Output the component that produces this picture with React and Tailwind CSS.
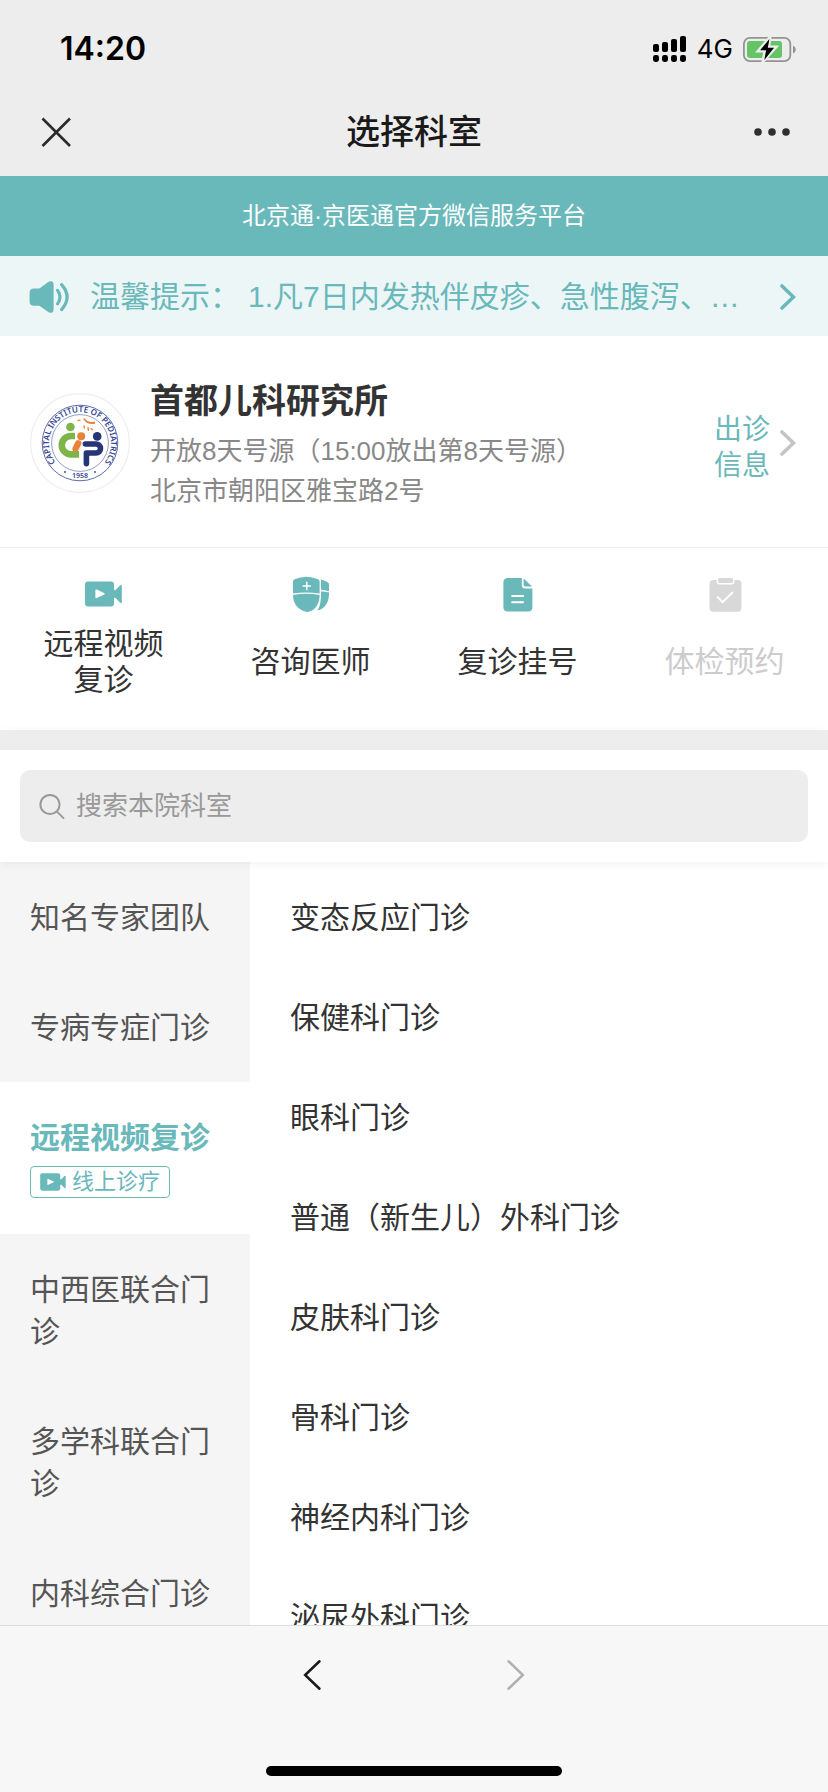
const categories = [
  { name: '知名专家团队' },
  { name: '专病专症门诊' },
  { name: '远程视频复诊', tag: '线上诊疗', active: true },
  { name: '中西医联合门诊' },
  { name: '多学科联合门诊' },
  { name: '内科综合门诊' },
];

const departments = [
  '变态反应门诊',
  '保健科门诊',
  '眼科门诊',
  '普通（新生儿）外科门诊',
  '皮肤科门诊',
  '骨科门诊',
  '神经内科门诊',
  '泌尿外科门诊',
];

function VideoIcon({ className }) {
  return (
    <svg viewBox="0 0 37 26" className={className} fill="currentColor" aria-hidden="true">
      <rect x="0" y="0.5" width="29" height="25" rx="3" />
      <path d="M28 9.5 30.5 9 35 4.4Q36.8 3 36.8 5V21Q36.8 23 35 21.6L30.5 17 28 16.5Z" />
      <path d="M10.4 9.4Q10.4 8 11.8 8.6L19.4 12.2Q20.4 12.8 19.4 13.4L11.8 17Q10.4 17.6 10.4 16.2Z" fill="#fff" />
    </svg>
  );
}

function ShieldIcon() {
  return (
    <svg viewBox="0 0 36 36" className="size-9" fill="currentColor" aria-hidden="true">
      <path d="M0 5.6Q0 3.8 1.6 3.2 13.4-1.8 25 3.2 26.6 3.8 26.6 5.6V17.6Q13.4 15.2 0 17.6Z" />
      <path d="M0 19Q13.4 16.6 26.6 19C26.6 27 23 33.6 16.4 35.6Q14.2 36.3 12 35.6C4.6 33.2 0 27 0 19Z" />
      <path d="M28 3.6Q32 4.6 35 6.4 36 7 36 8.2V15.2Q32 14.2 28 13.8Z" />
      <path d="M28 15.2Q32 15.4 36 16.6C36.2 25.6 32.4 32.8 24.4 34.6 27.2 30.6 28.2 24 28 15.2Z" />
      <path d="M13.8 5.8V14.2M9.6 10H18" stroke="#fff" strokeWidth="1.5" fill="none" />
    </svg>
  );
}

function DocumentIcon() {
  return (
    <svg viewBox="0 0 36 36" className="size-9" fill="currentColor" aria-hidden="true">
      <path d="M8 2H21.8V9Q21.8 12.4 25.2 12.4H32.4V31Q32.4 35.6 28 35.6H8Q3.4 35.6 3.4 31V6.6Q3.4 2 8 2Z" />
      <path d="M23.6 2.4 32 10.6H25.4Q23.6 10.6 23.6 8.8Z" />
      <path d="M11.4 20H23.8M11.4 26.2H23.8" stroke="#fff" strokeWidth="2" fill="none" />
    </svg>
  );
}

function ClipboardIcon() {
  return (
    <svg viewBox="0 0 36 36" className="size-9" fill="currentColor" aria-hidden="true">
      <rect x="2.5" y="4" width="32" height="31.7" rx="4" />
      <rect x="9.6" y="1" width="17.8" height="7.4" rx="3" fill="#fff" />
      <rect x="10.8" y="2" width="15.4" height="5" rx="2" />
      <path d="M10.2 20.6 15.6 26.2 26 16" stroke="#fff" strokeWidth="1.8" fill="none" />
    </svg>
  );
}

function Chevron({ className, width = 3, flip = false }) {
  return (
    <svg viewBox="0 0 16 26" className={className} fill="none" stroke="currentColor" strokeWidth={width} strokeLinecap="round" aria-hidden="true">
      <path d={flip ? 'M14 2 2.5 13 14 24' : 'M2 2 13.5 13 2 24'} />
    </svg>
  );
}

function HospitalLogo() {
  return (
    <svg viewBox="0 0 100 100" className="size-[100px] shrink-0" role="img" aria-label="首都儿科研究所">
      <defs>
        <path id="ring" d="M32 75.4A31 31 0 1 1 68 75.4" />
      </defs>
      <circle cx="50" cy="50" r="49.3" fill="#fff" stroke="#eeeeee" strokeWidth="1.2" />
      <g fill="none" stroke="#4a5aa3">
        <circle cx="50" cy="50" r="37.8" strokeWidth="0.9" />
        <circle cx="50" cy="50" r="28.4" strokeWidth="0.6" />
      </g>
      <g fill="#34458f" fontFamily="'Noto Sans', 'Liberation Sans', sans-serif" fontWeight="600">
        <text fontSize="8.2" textAnchor="middle">
          <textPath href="#ring" startOffset="50%">CAPITAL INSTITUTE OF PEDIATRICS</textPath>
        </text>
        <text x="50" y="85" fontSize="7" textAnchor="middle">1958</text>
      </g>
      <circle cx="35" cy="79" r="0.9" fill="#34458f" />
      <circle cx="65" cy="79" r="0.9" fill="#34458f" />
      <circle cx="40.4" cy="34" r="4.3" fill="#7db548" />
      <path d="M45 43H41A9.2 9.2 0 0 0 41 61.4H49" fill="none" stroke="#7db548" strokeWidth="6.6" />
      <path d="M48.2 50.4 45.6 55.6" stroke="#e8833a" strokeWidth="6.4" strokeLinecap="round" />
      <circle cx="51.2" cy="43.2" r="4" fill="#e8833a" />
      <path d="M53 25.4Q57 32.4 65 30.8L64.8 28.6Q58 30 54.6 25.2Z" fill="#e8833a" />
      <path d="M48 27.6 50 27.2M54 33 54.4 35M58 34.4 58.4 37.4M61 35.6 62.4 36.8" stroke="#e8833a" strokeWidth="1.3" strokeLinecap="round" />
      <circle cx="67.2" cy="43.4" r="4.3" fill="#263577" />
      <path d="M55.4 51H66A4.5 4.5 0 0 1 66 60H56.4V70.6" fill="none" stroke="#263577" strokeWidth="5.6" strokeLinecap="round" strokeLinejoin="round" />
    </svg>
  );
}

function StatusBar() {
  return (
    <div className="flex h-[88px] items-center justify-between pt-2.5 pr-8 pl-[60px]">
      <span className="font-[Inter,sans-serif] text-[32px] leading-9 font-semibold text-black">14:20</span>
      <div className="flex items-center gap-2.5">
        <svg viewBox="0 0 34 27" className="h-[27px] w-[34px]" aria-hidden="true">
          <rect x="0" y="8" width="6" height="8" rx="2" />
          <rect x="9" y="6" width="6" height="10" rx="2" />
          <rect x="18" y="3" width="6" height="13" rx="2" />
          <rect x="27" y="0" width="6" height="16" rx="2" />
          <rect x="0" y="19" width="6" height="7" rx="2.4" />
          <rect x="9" y="19" width="6" height="7" rx="2.4" />
          <rect x="18" y="19" width="6" height="7" rx="2.4" />
          <rect x="27" y="19" width="6" height="7" rx="2.4" />
        </svg>
        <span className="font-[Inter,sans-serif] text-[26px] leading-8 text-black">4G</span>
        <svg viewBox="0 0 53 25" className="h-[25px] w-[53px]" aria-hidden="true">
          <rect x="0.9" y="0.9" width="46.4" height="23.2" rx="6" fill="none" stroke="#939393" strokeWidth="1.8" />
          <rect x="4" y="4" width="35" height="17" rx="3" fill="#65c466" />
          <path d="M50 8.4Q52.8 9.6 52.8 12.5T50 16.6Z" fill="#939393" />
          <path d="M27.4-0.6 14.6 14.2H21.6L19.4 25.6 33.6 9.8H26Z" fill="#65c466" stroke="#ededed" strokeWidth="2.4" />
          <path d="M26.4 2 17.2 13.2H23.2L21.4 23 31 10.8H24.8Z" fill="#000" />
        </svg>
      </div>
    </div>
  );
}

function Shortcut({ icon, label, disabled }) {
  return (
    <button
      type="button"
      disabled={disabled}
      className={`flex flex-col items-center gap-3.5 ${disabled ? 'text-[#d8d8d8]' : 'text-[#69b8ba]'}`}
    >
      {icon}
      <span className={`flex h-[72px] max-w-[120px] items-center text-center text-[30px] leading-9 ${disabled ? 'text-[#cccccc]' : 'text-[#333333]'}`}>
        {label}
      </span>
    </button>
  );
}

export default function App() {
  return (
    <div
      lang="zh-CN"
      className="flex h-screen flex-col overflow-hidden bg-white font-['Liberation_Sans','Noto_Sans_CJK_SC',sans-serif] text-[#333333]"
    >
      <header className="shrink-0 bg-[#ededed]">
        <StatusBar />
        <div className="flex h-[88px] items-center justify-between px-9">
          <button type="button" aria-label="关闭" className="flex w-12 justify-start pl-1">
            <svg viewBox="0 0 32 32" className="size-8" fill="none" stroke="#2b2b2b" strokeWidth="2.6" aria-hidden="true">
              <path d="M2.5 2.5 30 30M30 2.5 2.5 30" />
            </svg>
          </button>
          <h1 className="text-[34px] leading-12 font-medium text-[#1a1a1a]">选择科室</h1>
          <button type="button" aria-label="更多" className="flex w-12 justify-end">
            <svg viewBox="0 0 40 10" className="h-2.5 w-10" fill="#2f2f2f" aria-hidden="true">
              <circle cx="6" cy="5" r="3.8" />
              <circle cx="20" cy="5" r="3.8" />
              <circle cx="34" cy="5" r="3.8" />
            </svg>
          </button>
        </div>
      </header>

      <p className="flex h-20 shrink-0 items-center justify-center bg-[#69b8ba] text-2xl text-white">
        北京通·京医通官方微信服务平台
      </p>

      <a href="#notice" className="flex h-20 shrink-0 items-center bg-[#edf6f7] pt-0.5 pr-8 pl-[29px] text-[#69b8ba]">
        <svg viewBox="0 0 41 32" className="h-8 w-[41px] shrink-0" fill="currentColor" aria-hidden="true">
          <path d="M5 7.4H10.4L19.6 0.8Q24.6-1.4 24.6 4V28Q24.6 33.4 19.6 31.2L10.4 24.8H5Q0.6 24.8 0.6 20.4V11.8Q0.6 7.4 5 7.4Z" />
          <path d="M28.6 9.4Q33.4 16 28.6 22.8M32.6 3.6Q43.6 16 32.6 28.6" fill="none" stroke="currentColor" strokeWidth="3.2" strokeLinecap="round" />
        </svg>
        <span className="ml-5 flex-1 truncate text-[30px] leading-10">
          <span className="mr-2">温馨提示：</span>1.凡7日内发热伴皮疹、急性腹泻、…
        </span>
        <Chevron className="h-[26px] w-4 shrink-0" width={3.6} />
      </a>

      <section className="flex shrink-0 items-center border-b border-[#eeeeee] pt-[39px] pr-8 pb-9 pl-[30px]">
        <HospitalLogo />
        <div className="ml-5 flex-1">
          <h2 className="mb-1 text-[34px] leading-[52px] font-bold">首都儿科研究所</h2>
          <p className="text-[26px] leading-10 text-[#888888]">开放8天号源（15:00放出第8天号源）</p>
          <p className="text-[26px] leading-10 text-[#888888]">北京市朝阳区雅宝路2号</p>
        </div>
        <a href="#schedule" className="flex items-center gap-2.5 text-[28px] leading-9 text-[#69b8ba]">
          <span className="mt-2.5 w-14">出诊信息</span>
          <Chevron className="h-[26px] w-4 text-[#c4c4c4]" width={3.6} />
        </a>
      </section>

      <nav className="grid shrink-0 grid-cols-4 pt-7 pb-8" aria-label="服务">
        <Shortcut icon={<span className="flex h-9 items-center"><VideoIcon className="h-[26px] w-[37px]" /></span>} label="远程视频复诊" />
        <Shortcut icon={<ShieldIcon />} label="咨询医师" />
        <Shortcut icon={<DocumentIcon />} label="复诊挂号" />
        <Shortcut icon={<ClipboardIcon />} label="体检预约" disabled />
      </nav>

      <div className="relative z-10 shrink-0 border-t-20 border-[#ededed] bg-white p-5 shadow-[0_2px_8px_rgba(0,0,0,0.06)]">
        <label className="flex h-[72px] items-center gap-[11px] rounded-[10px] bg-[#ededed] px-[18px]">
          <svg viewBox="0 0 27 27" className="size-[27px] shrink-0" fill="none" stroke="#999999" strokeWidth="2" aria-hidden="true">
            <circle cx="12" cy="11.5" r="9.6" />
            <path d="M19 18.6 26 25.6" />
          </svg>
          <input
            type="search"
            aria-label="搜索本院科室"
            placeholder="搜索本院科室"
            className="min-w-0 flex-1 bg-transparent text-[26px] leading-10 outline-none placeholder:text-[#999999]"
          />
        </label>
      </div>

      <main className="flex min-h-0 flex-1">
        <ul className="w-[250px] shrink-0 overflow-y-auto bg-[#f5f5f5] [scrollbar-width:none]">
          {categories.map((category) => (
            <li key={category.name}>
              <button
                type="button"
                className={`block w-full px-[30px] pt-[35px] pb-[33px] text-left text-[30px] leading-[42px] ${
                  category.active ? 'bg-white font-bold text-[#69b8ba]' : 'text-[#555555]'
                }`}
              >
                {category.name}
                {category.tag && (
                  <span className="mt-[7px] mb-[3px] flex h-8 w-[140px] items-center gap-1.5 rounded-sm border border-[#69b8ba] px-[9px] text-[22px] leading-7 font-normal">
                    <VideoIcon className="h-[18px] w-[26px] shrink-0" />
                    {category.tag}
                  </span>
                )}
              </button>
            </li>
          ))}
        </ul>
        <ul className="flex-1 overflow-y-auto pt-1.5 [scrollbar-width:none]">
          {departments.map((name) => (
            <li key={name}>
              <a href="#department" className="block pr-5 pl-10 text-[30px] leading-[100px]">
                {name}
              </a>
            </li>
          ))}
        </ul>
      </main>

      <footer className="shrink-0 border-t border-[#dddddd] bg-[#f7f7f7] pb-4">
        <div className="flex h-[98px] items-center justify-center gap-[168px]">
          <button type="button" aria-label="后退" className="flex w-9 justify-center text-[#1a1a1a]">
            <Chevron className="h-[34px] w-5" width={2} flip />
          </button>
          <button type="button" aria-label="前进" disabled className="flex w-9 justify-center text-[#b0b0b0]">
            <Chevron className="h-[34px] w-5" width={2} />
          </button>
        </div>
        <div className="mx-auto mt-[42px] h-2.5 w-[296px] rounded-full bg-black" />
      </footer>
    </div>
  );
}
